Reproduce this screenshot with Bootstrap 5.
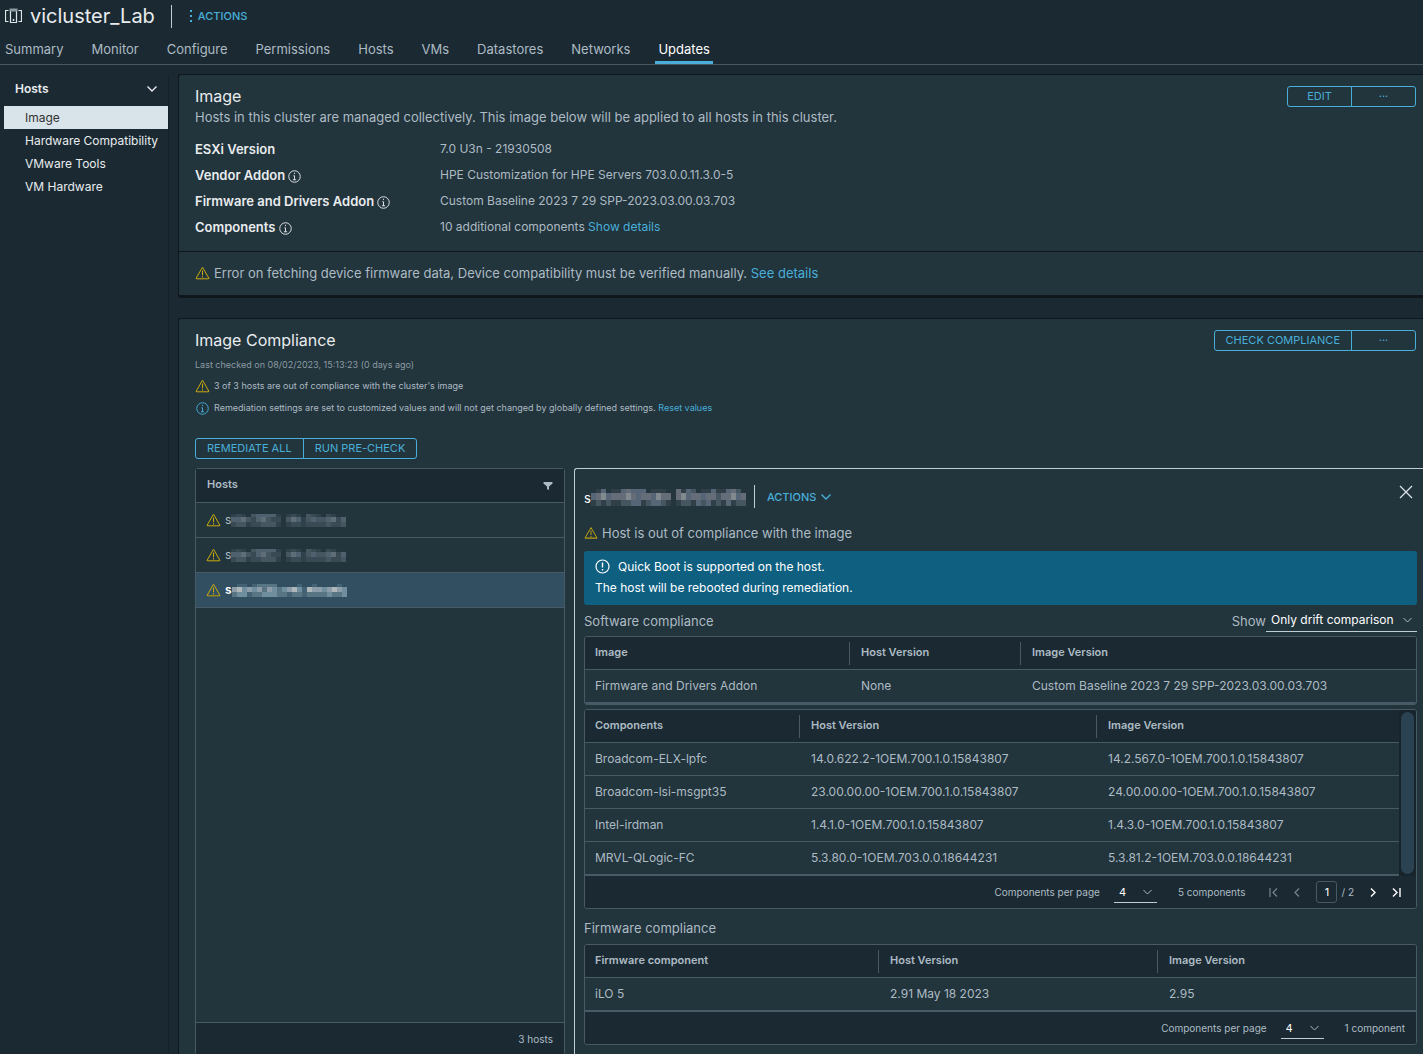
<!DOCTYPE html>
<html lang="en">
<head>
<meta charset="utf-8">
<meta name="viewport" content="width=device-width, initial-scale=1">
<title>vicluster_Lab - Updates</title>
<link href="https://cdn.jsdelivr.net/npm/bootstrap@5.3.0/dist/css/bootstrap.min.css" rel="stylesheet">
<style>
:root{--ink:#adbbc4;--bright:#e9ecef;--link:#49afd9;--page:#1b2a32;--panel:#22343c;--line:#495a67;--edge:#0f171c;--warn:#c8ab0e}
body{background:var(--page);color:var(--ink);font-family:Inter,"Liberation Sans",sans-serif;font-size:13px;line-height:18px}
a{color:var(--link);text-decoration:none}
svg{flex:none;fill:none;stroke:currentColor}
h1,h2,h3{margin:0;color:var(--bright);font-weight:400}
.shell{height:100vh;overflow:hidden}
.topbar{height:32px;padding:0 5px}
.topbar h1{font-size:20px;line-height:24px}
.vsep{width:1px;height:23px;background:#c1cdd4}
.plain-btn{background:none;border:0;padding:0;color:var(--link);font-size:11px;font-weight:500;line-height:18px}
.tabs-line{border-bottom:1px solid var(--line);height:33px;gap:22px;padding-left:2px}
.tabs-line .nav-link{color:var(--ink);padding:7px 3px 5px;line-height:20px;height:32px}
.tabs-line .nav-link.active{color:#fff;box-shadow:inset 0 -3px var(--link)}
.side{width:169px;border-right:1px solid #16222a;margin-top:9px}
.side-head{height:32px;padding:0 10px 2px 15px;color:var(--bright);background:none;border:0;font-size:12px;font-weight:600}
.side .nav-link{margin-left:4px;padding:0 0 0 21px;height:23px;line-height:23px;font-size:12px;color:var(--bright);white-space:nowrap}
.side .nav-link.active{background:#d9e4ea;color:#313131}
.content{padding:9px 0 0 9px}
.panel-box{background:var(--panel);border:1px solid var(--edge);border-right:0;border-bottom:3px solid var(--edge);border-radius:3px 0 0 3px;margin-bottom:20px}
.panel-top{padding:9px 7px 0 16px}
.panel-top h2{font-size:16px;line-height:24px}
.head-btns{margin-top:2px}
.facts{display:grid;grid-template-columns:245px 1fr;line-height:26px;margin:10px 0 11px}
.facts dt{color:var(--bright);font-weight:600}
.facts dd,.facts dt{margin:0;height:26px}
.facts dd{font-size:12px}
.notice{border-top:1px solid var(--edge);height:44px;padding:0 0 2px 16px}
.cbtn{border:1px solid var(--link);border-radius:3px;color:var(--link);font-size:11px;line-height:19px;padding:0 11px;min-width:65px}
.cbtn:hover{color:#fff;border-color:var(--link)}
.fine{font-size:9px;line-height:22px}
.stamp{color:#8c9ba3;line-height:20px;margin-top:3px}
.run-btns{margin-top:19px}
.split{gap:9px;margin-top:9px;padding-left:16px}
.hostlist{width:370px;height:587px;border:1px solid var(--line);border-radius:3px}
.grid-head{background:var(--page);color:var(--ink);font-size:11px;font-weight:600;height:34px;padding:0 11px;border-bottom:1px solid var(--line)}
.grid-head span{padding-bottom:3px}
.hostrow{height:35px;padding:0 10px;border-bottom:1px solid var(--line);gap:4px;font-size:12px}
.hostrow.picked{background:#324f62;color:#fff;font-weight:600}
.grid-foot{background:var(--page);font-size:10px;height:32px;padding:0 11px}
.hostlist .grid-foot{border-top:1px solid var(--line)}
.detail{border:1px solid #c1cdd4;border-width:1px 0 0 1px;border-radius:3px 0 0 0;padding:0 6px 20px 9px;min-width:0}
.detail-head{height:55px}
.mosaic-c{padding-top:2px}
.close-btn{margin-bottom:11px}
.host-state{margin-bottom:9px}
.boot{background:#0f5f81;color:#fff;border-radius:3px;padding:5px 11px 7px;font-size:12px;line-height:21px}
.sub{height:31px}
.sub-late{height:35px;padding-top:3px}
.gridbox{border:1px solid var(--line);border-radius:3px;overflow:hidden}
.gridbox table{width:100%;table-layout:fixed;border-collapse:separate;border-spacing:0;border-bottom:1px solid var(--line)}
.gridbox th{background:var(--page);font-size:11px;font-weight:600;height:33px;padding:0 0 0 10px;border-bottom:1px solid var(--line)}
.gridbox th+th{padding-left:0}
.gridbox th span{display:block;line-height:20px;padding-bottom:3px}
.gridbox th+th span{border-left:1px solid var(--line);padding-left:11px}
.gridbox td{height:33px;font-size:12px;line-height:18px;padding:0 0 0 10px;border-bottom:1px solid var(--line)}
.gridbox td+td{padding-left:12px}
.rail{width:17px;background:#17242b;padding:2px}
.thumb{width:13px;height:162px;border-radius:7px;background:#2b4252}
.pick{appearance:none;background:transparent url("data:image/svg+xml,%3Csvg xmlns='http://www.w3.org/2000/svg' width='9' height='6'%3E%3Cpath d='M.5 1l4 4 4-4' fill='none' stroke='%23adbbc4'/%3E%3C/svg%3E") no-repeat right 5px center;border:0;border-bottom:1px solid #c1cdd4;border-radius:0;color:#fff;padding:0 5px;height:22px;line-height:20px}
.pick option{color:#000}
.wide{width:151px;font-size:12px}
.slim{width:43px;font-size:11px;margin:0 21px 0 14px}
.pageno{width:21px;height:22px;border:1px solid var(--line);border-radius:3px;background:none;color:#fff;text-align:center;padding:0;font-size:11px}
.dim{color:#77868f}
</style>
<script src="https://cdn.jsdelivr.net/npm/bootstrap@5.3.0/dist/js/bootstrap.bundle.min.js"></script>
</head>
<body>
<svg width="0" height="0" class="position-absolute">
  <symbol id="warn" viewBox="0 0 15 14"><path d="M7.500 1.200L14 12.500H1z" stroke="#c8ab0e" stroke-linejoin="round"/><path d="M1.500 12.700h12" stroke="#96841c" stroke-width="1.500"/><path d="M7.500 4.500v4.800M7.500 10.200v1.300" stroke="#c8ab0e"/></symbol>
  <symbol id="info" viewBox="0 0 14 14"><circle cx="7" cy="7" r="6.200"/><path d="M7 3v1.400M5.800 6.200H7v4.300M5.300 10.500h3.400"/></symbol>
  <symbol id="down" viewBox="0 0 12 12"><path d="M1.500 3.500l4.500 4.500 4.500-4.500" stroke-width="1.400"/></symbol>
</svg>
<div class="shell d-flex flex-column">
  <header>
    <div class="topbar d-flex align-items-center">
      <svg width="17" height="16" viewBox="0 0 17 16" class="me-2" color="#dfe6ea"><path d="M3.500 2.500h-3v11h3M13.500 2.500h3v11h-3" stroke-width="1.200"/><path d="M5.500 3v11.500M11.500 3v11.500M5 14.500h7" stroke-width="1.200"/><path d="M4.500 2h8" stroke-width="3" stroke="#8c9ba3"/><path d="M8.500 11v2" stroke-width="1.500"/></svg>
      <h1>vicluster_Lab</h1>
      <span class="vsep mx-3"></span>
      <button class="plain-btn d-flex align-items-center" type="button"><svg width="6" height="14" viewBox="0 0 6 14" class="me-1"><path fill="currentColor" stroke="none" d="M2 1h2v2H2zM2 6h2v2H2zM2 11h2v2H2z"/></svg>ACTIONS</button>
    </div>
    <nav class="nav tabs-line flex-nowrap">
      <a class="nav-link" href="#">Summary</a><a class="nav-link" href="#">Monitor</a><a class="nav-link" href="#">Configure</a><a class="nav-link" href="#">Permissions</a><a class="nav-link" href="#">Hosts</a><a class="nav-link" href="#">VMs</a><a class="nav-link" href="#">Datastores</a><a class="nav-link" href="#">Networks</a><a class="nav-link active" href="#">Updates</a>
    </nav>
  </header>
  <div class="d-flex flex-grow-1 overflow-hidden">
    <aside class="side flex-shrink-0">
      <button class="side-head d-flex w-100 align-items-center justify-content-between" type="button">Hosts<svg width="12" height="12"><use href="#down"/></svg></button>
      <nav class="nav flex-column flex-nowrap">
        <a class="nav-link active" href="#">Image</a><a class="nav-link" href="#">Hardware Compatibility</a><a class="nav-link" href="#">VMware Tools</a><a class="nav-link" href="#">VM Hardware</a>
      </nav>
    </aside>
    <main class="content flex-grow-1 overflow-hidden">
      <section class="panel-box">
        <div class="panel-top">
          <div class="d-flex justify-content-between">
            <div><h2>Image</h2><p class="mb-0">Hosts in this cluster are managed collectively. This image below will be applied to all hosts in this cluster.</p></div>
            <div class="btn-group align-self-start head-btns"><button class="btn cbtn" type="button">EDIT</button><button class="btn cbtn" type="button" aria-label="More">···</button></div>
          </div>
          <dl class="facts">
            <dt>ESXi Version</dt><dd>7.0 U3n - 21930508</dd>
            <dt>Vendor Addon <svg width="13" height="13"><use href="#info"/></svg></dt><dd>HPE Customization for HPE Servers 703.0.0.11.3.0-5</dd>
            <dt>Firmware and Drivers Addon <svg width="13" height="13"><use href="#info"/></svg></dt><dd>Custom Baseline 2023 7 29 SPP-2023.03.00.03.703</dd>
            <dt>Components <svg width="13" height="13"><use href="#info"/></svg></dt><dd>10 additional components <a href="#">Show details</a></dd>
          </dl>
        </div>
        <div class="notice d-flex align-items-center"><svg width="15" height="14" class="me-1"><use href="#warn"/></svg><span>Error on fetching device firmware data, Device compatibility must be verified manually. <a href="#">See details</a></span></div>
      </section>
      <section class="panel-box">
        <div class="panel-top">
          <div class="d-flex justify-content-between">
            <h2>Image Compliance</h2>
            <div class="btn-group align-self-start head-btns"><button class="btn cbtn" type="button">CHECK COMPLIANCE</button><button class="btn cbtn" type="button" aria-label="More">···</button></div>
          </div>
          <div class="fine stamp">Last checked on 08/02/2023, 15:13:23 (0 days ago)</div>
          <div class="fine d-flex align-items-center"><svg width="15" height="14" class="me-1"><use href="#warn"/></svg>3 of 3 hosts are out of compliance with the cluster's image</div>
          <div class="fine d-flex align-items-center"><svg width="15" height="13" class="me-1" color="#49afd9"><use href="#info"/></svg><span>Remediation settings are set to customized values and will not get changed by globally defined settings. <a href="#">Reset values</a></span></div>
          <div class="btn-group run-btns"><button class="btn cbtn" type="button">REMEDIATE ALL</button><button class="btn cbtn" type="button">RUN PRE-CHECK</button></div>
        </div>
        <div class="split d-flex">
          <div class="hostlist d-flex flex-column flex-shrink-0">
            <div class="grid-head d-flex align-items-center justify-content-between"><span>Hosts</span><svg width="10" height="10" viewBox="0 0 10 10"><path d="M.5 1h9v1.500L6 5.500V9L4 8V5.500L.500 2.500z" fill="currentColor" stroke="none"/></svg></div>
            <div class="hostrow d-flex align-items-center"><svg width="15" height="14"><use href="#warn"/></svg><span class="d-flex align-items-center">s<svg data-mosaic="a" width="115" height="13"></svg></span></div>
            <div class="hostrow d-flex align-items-center"><svg width="15" height="14"><use href="#warn"/></svg><span class="d-flex align-items-center">s<svg data-mosaic="a" width="115" height="13"></svg></span></div>
            <div class="hostrow picked d-flex align-items-center"><svg width="15" height="14"><use href="#warn"/></svg><span class="d-flex align-items-center">s<svg data-mosaic="b" width="115" height="13"></svg></span></div>
            <div class="grid-foot d-flex align-items-center justify-content-end mt-auto">3 hosts</div>
          </div>
          <div class="detail flex-grow-1">
            <div class="detail-head d-flex align-items-center">
              <span class="d-flex align-items-center text-white mosaic-c">s<svg data-mosaic="c" width="155" height="17"></svg></span>
              <span class="vsep ms-2 me-2"></span>
              <button class="plain-btn d-flex align-items-center ms-1" type="button">ACTIONS<svg width="12" height="12" class="ms-1"><use href="#down"/></svg></button>
              <button class="plain-btn ms-auto me-1 close-btn" type="button" aria-label="Close"><svg width="14" height="14" viewBox="0 0 14 14" color="#dfe6ea"><path d="M1 1l12 12M13 1L1 13" stroke-width="1.200"/></svg></button>
            </div>
            <div class="host-state d-flex align-items-center"><svg width="14" height="14" class="me-1"><use href="#warn"/></svg>Host is out of compliance with the image</div>
            <div class="boot"><div class="d-flex align-items-center"><svg width="15" height="15" viewBox="0 0 15 15" class="me-2"><circle cx="7.500" cy="7.500" r="6.500" stroke-width="1.200"/><path d="M7.500 3.500v5M7.500 10v1.500" stroke-width="1.400"/></svg>Quick Boot is supported on the host.</div><div>The host will be rebooted during remediation.</div></div>
            <div class="sub d-flex align-items-center justify-content-between"><span>Software compliance</span><span class="d-flex align-items-center"><label for="show">Show</label><select id="show" class="pick wide"><option>Only drift comparison</option></select></span></div>
            <div class="gridbox mb-1"><table><colgroup><col style="width:264px"><col style="width:171px"><col></colgroup>
              <thead><tr><th><span>Image</span></th><th><span>Host Version</span></th><th><span>Image Version</span></th></tr></thead>
              <tbody><tr><td>Firmware and Drivers Addon</td><td>None</td><td>Custom Baseline 2023 7 29 SPP-2023.03.00.03.703</td></tr></tbody></table></div>
            <div class="gridbox"><div class="d-flex"><table><colgroup><col style="width:214px"><col style="width:297px"><col></colgroup>
              <thead><tr><th><span>Components</span></th><th><span>Host Version</span></th><th><span>Image Version</span></th></tr></thead>
              <tbody>
              <tr><td>Broadcom-ELX-lpfc</td><td>14.0.622.2-1OEM.700.1.0.15843807</td><td>14.2.567.0-1OEM.700.1.0.15843807</td></tr>
              <tr><td>Broadcom-lsi-msgpt35</td><td>23.00.00.00-1OEM.700.1.0.15843807</td><td>24.00.00.00-1OEM.700.1.0.15843807</td></tr>
              <tr><td>Intel-irdman</td><td>1.4.1.0-1OEM.700.1.0.15843807</td><td>1.4.3.0-1OEM.700.1.0.15843807</td></tr>
              <tr><td>MRVL-QLogic-FC</td><td>5.3.80.0-1OEM.703.0.0.18644231</td><td>5.3.81.2-1OEM.703.0.0.18644231</td></tr></tbody></table><div class="rail flex-shrink-0"><div class="thumb"></div></div></div>
              <div class="grid-foot d-flex align-items-center justify-content-end"><label for="pp">Components per page</label><select id="pp" class="pick slim"><option>4</option></select><span class="me-4">5 components</span>
                <svg width="9" height="9" viewBox="0 0 9 9" class="dim me-3"><path d="M1 0v9M8 .500l-4 4 4 4" stroke-width="1.200"/></svg><svg width="6" height="9" viewBox="0 0 6 9" class="dim me-3"><path d="M5 .500l-4 4 4 4" stroke-width="1.200"/></svg>
                <input class="pageno me-1" value="1" aria-label="Page"><span class="me-3">/ 2</span>
                <svg width="6" height="9" viewBox="0 0 6 9" class="text-white me-3"><path d="M1 .500l4 4-4 4" stroke-width="1.400"/></svg><svg width="9" height="9" viewBox="0 0 9 9" class="text-white me-1"><path d="M8 0v9M1 .500l4 4-4 4" stroke-width="1.400"/></svg></div></div>
            <div class="sub-late d-flex align-items-center">Firmware compliance</div>
            <div class="gridbox"><table><colgroup><col style="width:293px"><col style="width:279px"><col></colgroup>
              <thead><tr><th><span>Firmware component</span></th><th><span>Host Version</span></th><th><span>Image Version</span></th></tr></thead>
              <tbody><tr><td>iLO 5</td><td>2.91 May 18 2023</td><td>2.95</td></tr></tbody></table>
              <div class="grid-foot d-flex align-items-center justify-content-end"><label for="pf">Components per page</label><select id="pf" class="pick slim"><option>4</option></select><span>1 component</span></div></div>
          </div>
        </div>
      </section>
    </main>
  </div>
</div>
<script>
// Redacted host names, drawn as a mosaic: three rows of 5px cells, dark to light.
const mosaics = {
  a: {pal: ['#25353e','#2f414b','#3a4a55','#465661','#4f606e','#5f6d76'], rows: ['12103444410121032102100','44532453220354134334524','23312233310122122223223'], h: [0,3,8,13]},
  b: {pal: ['#324f62','#436375','#587584','#6f8f9f','#8d9eaa','#b0b7bb'], rows: ['01101222200001001000010','45343424323453154434543','23312233322122122223223'], h: [0,3,8,13]},
  c: {pal: ['#25353e','#303f48','#455660','#566676','#646d78','#7f898e'], rows: ['0130113433301110041320113113420','3453444543443544045344344244534','1212112233123321012213231213122'], h: [0,4,11,17]}
};
document.querySelectorAll('[data-mosaic]').forEach(el => {
  const m = mosaics[el.dataset.mosaic];
  el.innerHTML = m.rows.map((r, y) => [...r].map((c, x) => `<rect x="${x*5}" y="${m.h[y]}" width="5" height="${m.h[y+1]-m.h[y]}" fill="${m.pal[c]}" stroke="none"/>`).join('')).join('');
});
</script>
</body>
</html>
